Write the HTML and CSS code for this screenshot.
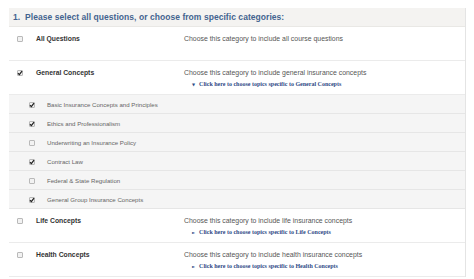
FILE: index.html
```html
<!DOCTYPE html>
<html>
<head>
<meta charset="utf-8">
<link rel="stylesheet" href="styles.css">
</head>
<body>
<div class="panel">
  <div class="head">1.&nbsp; Please select all questions, or choose from specific categories:</div>

  <div class="row">
    <div class="cb-col"><span class="cb"></span></div>
    <div class="label">All Questions</div>
    <div class="desc">
      <div class="desc-text">Choose this category to include all course questions</div>
    </div>
  </div>

  <div class="row">
    <div class="cb-col"><span class="cb checked"><svg viewBox="0 0 6 6"><path d="M1 3.2 L2.4 4.6 L5 1.2" /></svg></span></div>
    <div class="label">General Concepts</div>
    <div class="desc">
      <div class="desc-text">Choose this category to include general insurance concepts</div>
      <div class="link"><span class="tri">&#9660;</span>Click here to choose topics specific to General Concepts</div>
    </div>
  </div>

  <div class="sub">
    <div class="cb-col"><span class="cb checked"><svg viewBox="0 0 6 6"><path d="M1 3.2 L2.4 4.6 L5 1.2" /></svg></span></div>
    <div class="sub-label">Basic Insurance Concepts and Principles</div>
  </div>
  <div class="sub">
    <div class="cb-col"><span class="cb checked"><svg viewBox="0 0 6 6"><path d="M1 3.2 L2.4 4.6 L5 1.2" /></svg></span></div>
    <div class="sub-label">Ethics and Professionalism</div>
  </div>
  <div class="sub">
    <div class="cb-col"><span class="cb"></span></div>
    <div class="sub-label">Underwriting an Insurance Policy</div>
  </div>
  <div class="sub">
    <div class="cb-col"><span class="cb checked"><svg viewBox="0 0 6 6"><path d="M1 3.2 L2.4 4.6 L5 1.2" /></svg></span></div>
    <div class="sub-label">Contract Law</div>
  </div>
  <div class="sub">
    <div class="cb-col"><span class="cb"></span></div>
    <div class="sub-label">Federal &amp; State Regulation</div>
  </div>
  <div class="sub">
    <div class="cb-col"><span class="cb checked"><svg viewBox="0 0 6 6"><path d="M1 3.2 L2.4 4.6 L5 1.2" /></svg></span></div>
    <div class="sub-label">General Group Insurance Concepts</div>
  </div>

  <div class="row">
    <div class="cb-col"><span class="cb"></span></div>
    <div class="label">Life Concepts</div>
    <div class="desc">
      <div class="desc-text">Choose this category to include life insurance concepts</div>
      <div class="link"><span class="tri">&#9658;</span>Click here to choose topics specific to Life Concepts</div>
    </div>
  </div>

  <div class="row">
    <div class="cb-col"><span class="cb"></span></div>
    <div class="label">Health Concepts</div>
    <div class="desc">
      <div class="desc-text">Choose this category to include health insurance concepts</div>
      <div class="link"><span class="tri">&#9658;</span>Click here to choose topics specific to Health Concepts</div>
    </div>
  </div>
</div>
</body>
</html>
```

FILE: styles.css
```css
html, body {
  margin: 0;
  padding: 0;
  background: #ffffff;
}
body {
  font-family: "Liberation Sans", Arial, sans-serif;
  padding: 8px 0 0 9px;
}
.panel {
  width: 456px;
  border-right: 1px solid #e4e4e4;
}
.head {
  height: 18px;
  line-height: 19px;
  background: #f4f3f1;
  border-bottom: 1px solid #e9e8e5;
  color: #43638f;
  font-weight: bold;
  font-size: 8.5px;
  letter-spacing: 0.05px;
  padding-left: 4px;
  white-space: nowrap;
}
.row {
  display: flex;
  height: 33px;
  border-bottom: 1px solid #ebebeb;
  background: #fff;
}
.cb-col {
  width: 27px;
  display: flex;
  justify-content: flex-start;
  padding-left: 8px;
  padding-top: 9px;
  box-sizing: border-box;
}
.cb {
  display: block;
  width: 4px;
  height: 4px;
  border: 1px solid #b9b9b9;
  background: #f2f2f2;
  border-radius: 1px;
  position: relative;
}
.cb svg {
  position: absolute;
  left: -1px;
  top: -1px;
  width: 6px;
  height: 6px;
  fill: none;
  stroke: #222;
  stroke-width: 1.3;
}
.label {
  width: 148px;
  font-weight: bold;
  font-size: 6.8px;
  color: #333;
  padding-top: 8px;
}
.desc {
  flex: 1;
  padding-top: 8px;
}
.desc-text {
  font-size: 6.9px;
  color: #555;
}
.link {
  margin-top: 5px;
  padding-left: 8px;
  font-family: "Liberation Serif", "Times New Roman", serif;
  font-weight: bold;
  font-size: 6px;
  color: #2f4a86;
}
.tri {
  font-family: "DejaVu Sans", sans-serif;
  font-size: 4px;
  margin-right: 4px;
  color: #2f4a86;
}
.sub {
  display: flex;
  height: 18px;
  background: #f5f5f5;
  border-bottom: 1px solid #e6e6e6;
}
.sub .cb-col {
  width: 38px;
  padding-left: 20px;
  padding-top: 7px;
}
.sub-label {
  font-size: 6.1px;
  color: #666;
  padding-top: 6px;
}
```
